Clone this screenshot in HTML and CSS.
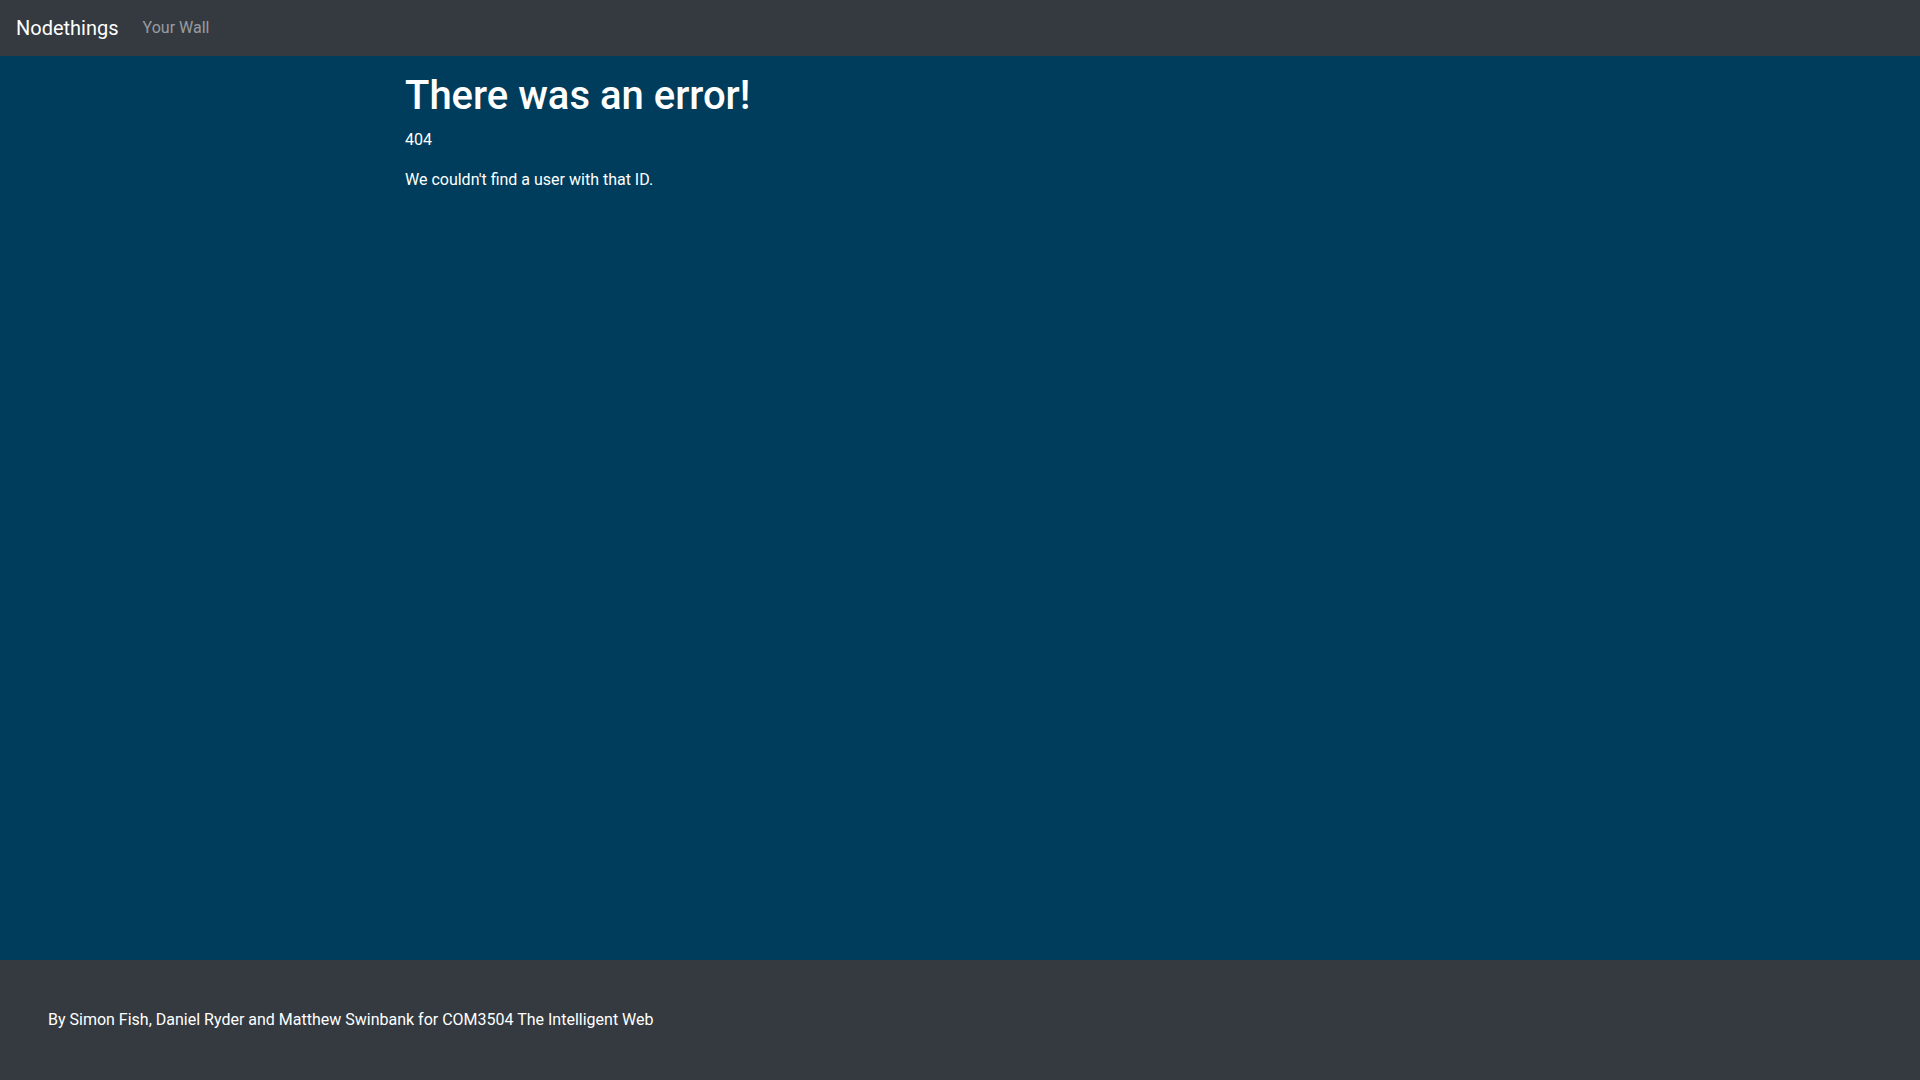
FILE: index.html
```html
<!DOCTYPE html>
<html lang="en">
<head>
<meta charset="utf-8">
<title>Nodethings</title>
<link rel="stylesheet" href="styles.css">
</head>
<body>
<nav class="navbar">
  <a class="brand" href="#">Nodethings</a>
  <a class="nav-link" href="#">Your Wall</a>
</nav>
<main class="main">
  <div class="container">
    <h1 class="title">There was an error!</h1>
    <p class="text">404</p>
    <p class="text">We couldn't find a user with that ID.</p>
  </div>
</main>
<footer class="footer">
  <p class="footer-text">By Simon Fish, Daniel Ryder and Matthew Swinbank for COM3504 The Intelligent Web</p>
</footer>
</body>
</html>
```
FILE: styles.css
```css
* { box-sizing: border-box; }
html, body { height: 100%; }
body {
  margin: 0;
  font-family: Roboto, "Liberation Sans", sans-serif;
  font-size: 16px;
  line-height: 1.5;
  color: #fff;
  display: flex;
  flex-direction: column;
  min-height: 100vh;
  background: #003d5c;
}
.navbar {
  height: 56px;
  background: #343a40;
  display: flex;
  align-items: center;
  padding: 8px 16px;
}
.brand {
  font-size: 20px;
  line-height: 30px;
  color: #fff;
  text-decoration: none;
  margin-right: 16px;
}
.nav-link {
  color: rgba(255,255,255,0.5);
  text-decoration: none;
  padding: 8px;
  line-height: 24px;
}
.main {
  flex: 1;
  background: #003d5c;
  padding-top: 16px;
}
.container {
  max-width: 1140px;
  margin: 0 auto;
  padding: 0 15px;
}
.title {
  margin: 0 0 8px;
  font-size: 40px;
  font-weight: 500;
  line-height: 1.2;
}
.text {
  margin: 0 0 16px;
}
.footer {
  height: 120px;
  background: #343a40;
  padding: 48px;
  flex-shrink: 0;
}
.footer-text {
  margin: 0;
  line-height: 24px;
}
```
